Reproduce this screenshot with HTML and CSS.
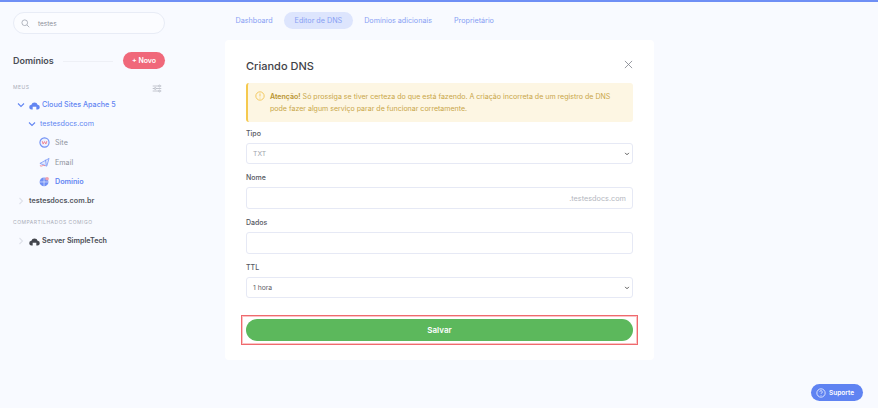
FILE: index.html
```html
<!DOCTYPE html>
<html lang="en">
<head>
    <meta charset="UTF-8">
    <title>Criando DNS</title>
    <link rel="stylesheet" href="styles.css">
</head>
<body>
    <div class="app">
        <aside class="sidebar">
            <div class="search">
                <svg class="search-icon" viewBox="0 0 12 12"><circle cx="5" cy="5" r="3.8"/><path d="M8 8l3 3"/></svg>
                <span>testes</span>
            </div>
            <div class="domains-head">
                <h2>Domínios</h2>
                <span class="head-line"></span>
                <button class="new-btn">+ Novo</button>
            </div>
            <div class="group-head">
                <span class="group-label">MEUS</span>
                <svg class="filter-icon" viewBox="0 0 14 12"><path d="M1 2.5h8M12 2.5h1M1 6h2M6 6h7M1 9.5h8M12 9.5h1"/><circle cx="10.5" cy="2.5" r="1.3"/><circle cx="4.5" cy="6" r="1.3"/><circle cx="10.5" cy="9.5" r="1.3"/></svg>
            </div>
            <div class="row row-server active">
                <svg class="chev" viewBox="0 0 8 8"><path d="M1 2.5l3 3 3-3"/></svg>
                <svg class="cloud" viewBox="0 0 12 11"><path d="M3 10.5A2.6 2.6 0 0 1 2.6 5.3 3.5 3.5 0 0 1 9.4 5.3 2.6 2.6 0 0 1 9 10.5H8V7.5H4V10.5Z"/></svg>
                <span>Cloud Sites Apache 5</span>
            </div>
            <div class="row row-domain active">
                <svg class="chev" viewBox="0 0 8 8"><path d="M1 2.5l3 3 3-3"/></svg>
                <span>testesdocs.com</span>
            </div>
            <div class="row row-item">
                <svg class="item-icon" viewBox="0 0 12 12"><circle cx="6" cy="6" r="5" fill="#eef2ff" stroke="#6f8ff5" stroke-width="1.2"/><path d="M3.5 4.5l1 3.2L6 5l1.5 2.7 1-3.2" fill="none" stroke="#ef7f8e"/></svg>
                <span>Site</span>
            </div>
            <div class="row row-item">
                <svg class="item-icon" viewBox="0 0 12 12"><path d="M1 7l10-5.5L8.5 10z" fill="#dfe7fe" stroke="#6f8ff5" stroke-width=".8"/><path d="M7 3l1 6" stroke="#6f8ff5" stroke-width=".8"/><path d="M1 9.5c2 1.5 3.5-1.5 5.5 0" fill="none" stroke="#ef7f8e"/></svg>
                <span>Email</span>
            </div>
            <div class="row row-item current">
                <svg class="item-icon" viewBox="0 0 12 12"><circle cx="5.5" cy="6.5" r="4.8" fill="#6f8ff5"/><path d="M1 6.5h9M5.5 1.700v9.600" stroke="#fff" stroke-width=".6"/><circle cx="8.8" cy="3" r="2" fill="#f3a3ae"/></svg>
                <span>Domínio</span>
            </div>
            <div class="row row-plain">
                <svg class="chev closed" viewBox="0 0 8 8"><path d="M2.5 1l3 3-3 3"/></svg>
                <span>testesdocs.com.br</span>
            </div>
            <div class="group-label shared">COMPARTILHADOS COMIGO</div>
            <div class="row row-shared">
                <svg class="chev closed" viewBox="0 0 8 8"><path d="M2.5 1l3 3-3 3"/></svg>
                <svg class="cloud dark" viewBox="0 0 12 11"><path d="M3 10.5A2.6 2.6 0 0 1 2.6 5.3 3.5 3.5 0 0 1 9.4 5.3 2.6 2.6 0 0 1 9 10.5H8V7.5H4V10.5Z"/></svg>
                <span>Server SimpleTech</span>
            </div>
        </aside>

        <main class="content">
            <nav class="tabs">
                <a class="tab">Dashboard</a>
                <a class="tab selected">Editor de DNS</a>
                <a class="tab">Domínios adicionais</a>
                <a class="tab">Proprietário</a>
            </nav>

            <section class="card">
                <div class="card-head">
                    <h1>Criando DNS</h1>
                    <svg class="close" viewBox="0 0 10 10"><path d="M1 1l8 8M9 1l-8 8"/></svg>
                </div>
                <div class="alert">
                    <svg class="alert-icon" viewBox="0 0 12 12"><circle cx="6" cy="6" r="5"/><path d="M6 3v3.5M6 8v1"/></svg>
                    <p><strong>Atenção!</strong> Só prossiga se tiver certeza do que está fazendo. A criação incorreta de um registro de DNS pode fazer algum serviço parar de funcionar corretamente.</p>
                </div>

                <div class="field">
                    <label>Tipo</label>
                    <div class="control short select muted">TXT<svg class="caret" viewBox="0 0 8 8"><path d="M1.5 2.5L4 5l2.5-2.5"/></svg></div>
                </div>
                <div class="field">
                    <label>Nome</label>
                    <div class="control suffix">.testesdocs.com</div>
                </div>
                <div class="field">
                    <label>Dados</label>
                    <div class="control"></div>
                </div>
                <div class="field">
                    <label>TTL</label>
                    <div class="control short select">1 hora<svg class="caret" viewBox="0 0 8 8"><path d="M1.5 2.5L4 5l2.5-2.5"/></svg></div>
                </div>

                <div class="save-wrap">
                    <button class="save-btn">Salvar</button>
                    <span class="highlight"></span>
                </div>
            </section>
        </main>
    </div>

    <button class="support">
        <svg viewBox="0 0 12 12"><circle cx="6" cy="6" r="5"/><path d="M4.5 4.7a1.5 1.5 0 1 1 2.3 1.3c-.6.4-.8.6-.8 1.2M6 8.5v.8"/></svg>
        Suporte
    </button>
</body>
</html>
```

FILE: styles.css
```css
/* General Body Styles */
body {
    font-family: 'Inter', 'Noto Sans', sans-serif;
    background-color: #f8faff;
    margin: 0;
    height: 408px;
    overflow: hidden;
    border-top: 2px solid #6f8ff5;
    box-sizing: border-box;
    position: relative;
}

svg {
    display: block;
    flex-shrink: 0;
}

.app {
    display: flex;
}

/* Sidebar */
.sidebar {
    width: 225px;
    box-sizing: border-box;
    padding: 10px 60px 0 13px;
}

.search {
    display: flex;
    align-items: center;
    gap: 8px;
    height: 22px;
    box-sizing: border-box;
    padding: 1px 0 0 7px;
    background-color: #fbfcff;
    border: 1px solid #e8ecf6;
    border-radius: 11px;
    font-size: 6.5px;
    color: #8b8f99;
}

.search-icon {
    width: 9px;
    height: 9px;
    fill: none;
    stroke: #a3a8b3;
    stroke-width: 1.1;
}

.domains-head {
    display: flex;
    align-items: center;
    margin-top: 17px;
    height: 18px;
}

.domains-head h2 {
    margin: 0;
    font-size: 9px;
    font-weight: 600;
    color: #4a4d55;
}

.head-line {
    flex: 1;
    margin: 3px 10px 0 9px;
    border-top: 1px solid #eef0f6;
}

.new-btn {
    width: 42px;
    height: 17px;
    padding: 0;
    border: none;
    border-radius: 9px;
    background-color: #f0687a;
    color: #fff;
    font-family: inherit;
    font-size: 7px;
    font-weight: 600;
}

.group-head {
    display: flex;
    justify-content: space-between;
    align-items: center;
    margin-top: 12px;
    height: 12px;
    margin-bottom: 2px;
    padding-right: 3px;
}

.group-label {
    font-size: 5px;
    letter-spacing: .5px;
    color: #a9adb8;
}

.filter-icon {
    width: 10px;
    height: 9px;
    margin-top: 2px;
    fill: none;
    stroke: #9a9fab;
    stroke-width: .8;
}

.row {
    display: flex;
    align-items: center;
    height: 19.2px;
    font-size: 7.2px;
}

.row.active {
    color: #6285f2;
}

.row-server {
    padding-left: 4px;
    font-weight: 500;
}

.row-domain {
    padding-left: 15px;
    font-weight: 400;
}

.row-item {
    padding-left: 26px;
    gap: 5px;
    color: #8e929c;
}

.row-item.current {
    color: #6285f2;
    font-weight: 600;
}

.row-plain {
    padding-left: 4px;
    color: #55585f;
    font-weight: 600;
}

.row-shared {
    padding-left: 4px;
    color: #4a4d55;
    font-weight: 600;
}

.chev {
    width: 8px;
    height: 8px;
    margin-right: 4px;
    fill: none;
    stroke: #6285f2;
    stroke-width: 1.1;
}

.chev.closed {
    stroke: #dfe2ea;
}

.cloud {
    width: 11px;
    height: 10px;
    margin-right: 2px;
    fill: #6285f2;
}

.cloud.dark {
    fill: #43464d;
}

.item-icon {
    width: 11px;
    height: 11px;
}

.group-label.shared {
    margin: 7px 0 3px;
    height: 11px;
    line-height: 11px;
}

/* Main content */
.content {
    width: 429px;
}

.tabs {
    display: flex;
    align-items: center;
    gap: 1px;
    height: 38px;
    margin-top: -1px;
    margin-bottom: 1px;
}

.tab {
    padding: 0 10.5px;
    height: 17px;
    line-height: 17px;
    border-radius: 9px;
    font-size: 7.2px;
    color: #87a0f4;
}

.tab.selected {
    background-color: #dde5fd;
}

.card {
    background-color: #ffffff;
    border-radius: 4px;
    padding: 0 21px;
    height: 320px;
    box-sizing: border-box;
}

.card-head {
    display: flex;
    justify-content: space-between;
    align-items: center;
    height: 43px;
    padding-top: 9px;
    box-sizing: border-box;
}

.card-head h1 {
    margin: 0;
    font-size: 11px;
    font-weight: 500;
    color: #3f4248;
}

.close {
    width: 9px;
    height: 9px;
    margin-top: -4px;
    fill: none;
    stroke: #7f838c;
    stroke-width: .9;
}

.alert {
    display: flex;
    gap: 5px;
    height: 39px;
    box-sizing: border-box;
    padding: 8px 10px 0 7px;
    background-color: #fdf6e3;
    border-left: 2px solid #f5c94e;
    border-radius: 3px;
    margin-bottom: 6px;
}

.alert-icon {
    width: 10px;
    height: 10px;
    fill: none;
    stroke: #f0c24a;
    stroke-width: 1;
}

.alert p {
    margin: 0;
    font-size: 7.05px;
    line-height: 12px;
    color: #c9a649;
}

.alert strong {
    font-weight: 600;
    color: #b99430;
}

.field {
    margin-bottom: 8px;
}

.field label {
    display: block;
    font-size: 7px;
    line-height: 12px;
    margin-bottom: 3px;
    color: #55585f;
    font-weight: 500;
}

.control {
    display: flex;
    align-items: center;
    justify-content: space-between;
    height: 22px;
    box-sizing: border-box;
    padding: 0 2px 0 6px;
    background-color: #fff;
    border: 1px solid #e6e9f5;
    border-radius: 3px;
    font-size: 6.8px;
    color: #5f6269;
}

.control.short {
    height: 21px;
}

.control.muted {
    color: #a2a5ad;
}

.control.suffix {
    justify-content: flex-end;
    padding-right: 6px;
    font-size: 7.3px;
    color: #b4b7c0;
}

.caret {
    width: 6px;
    height: 6px;
    fill: none;
    stroke: #555;
    stroke-width: 1.3;
}

/* Save button with its annotation frame */
.save-wrap {
    position: relative;
    margin-top: 21px;
}

.save-btn {
    display: block;
    width: 100%;
    height: 22px;
    padding: 0;
    border: none;
    border-radius: 11px;
    background-color: #5cb85c;
    color: #fff;
    font-family: inherit;
    font-size: 8px;
    font-weight: 600;
}

.highlight {
    position: absolute;
    left: -5px;
    right: -5px;
    top: -4px;
    bottom: -4px;
    border: 1px solid #ef6a6e;
    box-shadow: inset 0 0 0 1px #fbc4c5;
}

/* Support button */
.support {
    position: absolute;
    right: 15px;
    bottom: 7px;
    display: flex;
    align-items: center;
    gap: 3px;
    width: 52px;
    height: 17px;
    padding: 0 0 0 5px;
    border: none;
    border-radius: 9px;
    background-color: #5f83f2;
    color: #fff;
    font-family: inherit;
    font-size: 6.5px;
    font-weight: 600;
}

.support svg {
    width: 10px;
    height: 10px;
    fill: none;
    stroke: #fff;
    stroke-width: .9;
}
```
